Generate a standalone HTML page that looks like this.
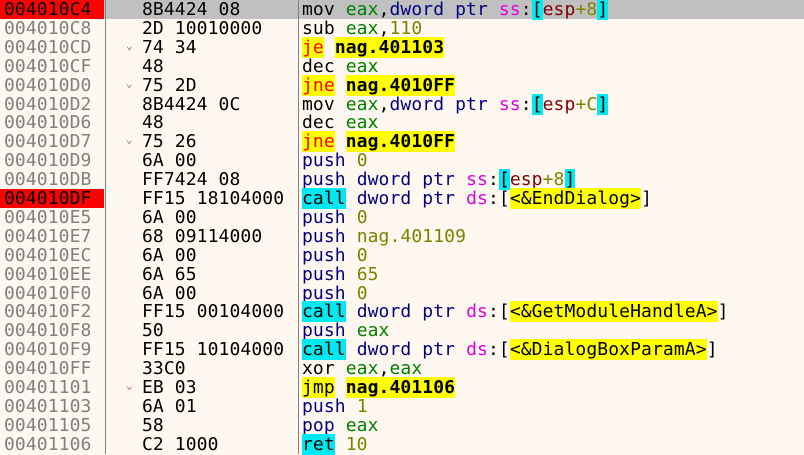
<!DOCTYPE html>
<html><head><style>
body{margin:0;width:804px;height:454px;overflow:hidden;background:#fff8f0;font-family:"DejaVu Sans Mono","Liberation Mono",monospace;font-size:18px;letter-spacing:0.1px;}
.r{position:absolute;left:0;width:804px;height:19px;line-height:19px;white-space:pre;}
.a{position:absolute;left:0;width:104px;padding-left:4px;box-sizing:border-box;color:#808080;height:19px}
.a.red{background:#ff0000;color:#000}
.b{position:absolute;left:142px;color:#000}
.v{position:absolute;left:126px;top:-2px;color:#c06070;font-size:11px}
.i{position:absolute;left:302px;color:#000}
.sel{background:#c0c0c0}
.g{color:#008000}.n{color:#000080}.m{color:#e000e0}.o{color:#808000}.br{color:#800000}
.c{background:#00e8f0}.y{background:#ffff00}.jr{background:#ffff00;color:#ff0000}
.t{background:#ffff00;font-weight:bold}
.bl{color:#000080}
#s1{position:absolute;left:105px;top:0;width:1px;height:454px;background:#808080}
#s2{position:absolute;left:298px;top:0;width:1px;height:454px;background:#808080}
</style></head><body>
<div class="r sel" style="top:0"><span class="a red">004010C4</span><span class="b">8B4424 08</span><span class="i">mov <span class="g">eax</span>,<span class="n">dword ptr</span> <span class="m">ss</span>:<span class="c">[</span><span class="br">esp</span><span class="o">+8</span><span class="c">]</span></span></div>
<div class="r" style="top:19px"><span class="a">004010C8</span><span class="b">2D 10010000</span><span class="i">sub <span class="g">eax</span>,<span class="o">110</span></span></div>
<div class="r" style="top:38px"><span class="a">004010CD</span><span class="v">⌄</span><span class="b">74 34</span><span class="i"><span class="jr">je</span> <span class="t">nag.401103</span></span></div>
<div class="r" style="top:57px"><span class="a">004010CF</span><span class="b">48</span><span class="i">dec <span class="g">eax</span></span></div>
<div class="r" style="top:76px"><span class="a">004010D0</span><span class="v">⌄</span><span class="b">75 2D</span><span class="i"><span class="jr">jne</span> <span class="t">nag.4010FF</span></span></div>
<div class="r" style="top:95px"><span class="a">004010D2</span><span class="b">8B4424 0C</span><span class="i">mov <span class="g">eax</span>,<span class="n">dword ptr</span> <span class="m">ss</span>:<span class="c">[</span><span class="br">esp</span><span class="o">+C</span><span class="c">]</span></span></div>
<div class="r" style="top:113px"><span class="a">004010D6</span><span class="b">48</span><span class="i">dec <span class="g">eax</span></span></div>
<div class="r" style="top:132px"><span class="a">004010D7</span><span class="v">⌄</span><span class="b">75 26</span><span class="i"><span class="jr">jne</span> <span class="t">nag.4010FF</span></span></div>
<div class="r" style="top:151px"><span class="a">004010D9</span><span class="b">6A 00</span><span class="i"><span class="bl">push</span> <span class="o">0</span></span></div>
<div class="r" style="top:170px"><span class="a">004010DB</span><span class="b">FF7424 08</span><span class="i"><span class="bl">push</span> <span class="n">dword ptr</span> <span class="m">ss</span>:<span class="c">[</span><span class="br">esp</span><span class="o">+8</span><span class="c">]</span></span></div>
<div class="r" style="top:189px"><span class="a red">004010DF</span><span class="b">FF15 18104000</span><span class="i"><span class="c">call</span> <span class="n">dword ptr</span> <span class="m">ds</span>:[<span class="y">&lt;&amp;EndDialog&gt;</span>]</span></div>
<div class="r" style="top:208px"><span class="a">004010E5</span><span class="b">6A 00</span><span class="i"><span class="bl">push</span> <span class="o">0</span></span></div>
<div class="r" style="top:227px"><span class="a">004010E7</span><span class="b">68 09114000</span><span class="i"><span class="bl">push</span> <span class="o">nag.401109</span></span></div>
<div class="r" style="top:246px"><span class="a">004010EC</span><span class="b">6A 00</span><span class="i"><span class="bl">push</span> <span class="o">0</span></span></div>
<div class="r" style="top:265px"><span class="a">004010EE</span><span class="b">6A 65</span><span class="i"><span class="bl">push</span> <span class="o">65</span></span></div>
<div class="r" style="top:284px"><span class="a">004010F0</span><span class="b">6A 00</span><span class="i"><span class="bl">push</span> <span class="o">0</span></span></div>
<div class="r" style="top:302px"><span class="a">004010F2</span><span class="b">FF15 00104000</span><span class="i"><span class="c">call</span> <span class="n">dword ptr</span> <span class="m">ds</span>:[<span class="y">&lt;&amp;GetModuleHandleA&gt;</span>]</span></div>
<div class="r" style="top:321px"><span class="a">004010F8</span><span class="b">50</span><span class="i"><span class="bl">push</span> <span class="g">eax</span></span></div>
<div class="r" style="top:340px"><span class="a">004010F9</span><span class="b">FF15 10104000</span><span class="i"><span class="c">call</span> <span class="n">dword ptr</span> <span class="m">ds</span>:[<span class="y">&lt;&amp;DialogBoxParamA&gt;</span>]</span></div>
<div class="r" style="top:359px"><span class="a">004010FF</span><span class="b">33C0</span><span class="i">xor <span class="g">eax</span>,<span class="g">eax</span></span></div>
<div class="r" style="top:378px"><span class="a">00401101</span><span class="v">⌄</span><span class="b">EB 03</span><span class="i"><span class="y">jmp</span> <span class="t">nag.401106</span></span></div>
<div class="r" style="top:397px"><span class="a">00401103</span><span class="b">6A 01</span><span class="i"><span class="bl">push</span> <span class="o">1</span></span></div>
<div class="r" style="top:416px"><span class="a">00401105</span><span class="b">58</span><span class="i"><span class="bl">pop</span> <span class="g">eax</span></span></div>
<div class="r" style="top:435px"><span class="a">00401106</span><span class="b">C2 1000</span><span class="i"><span class="c">ret</span> <span class="o">10</span></span></div>
<div id="s1"></div><div id="s2"></div>
</body></html>
